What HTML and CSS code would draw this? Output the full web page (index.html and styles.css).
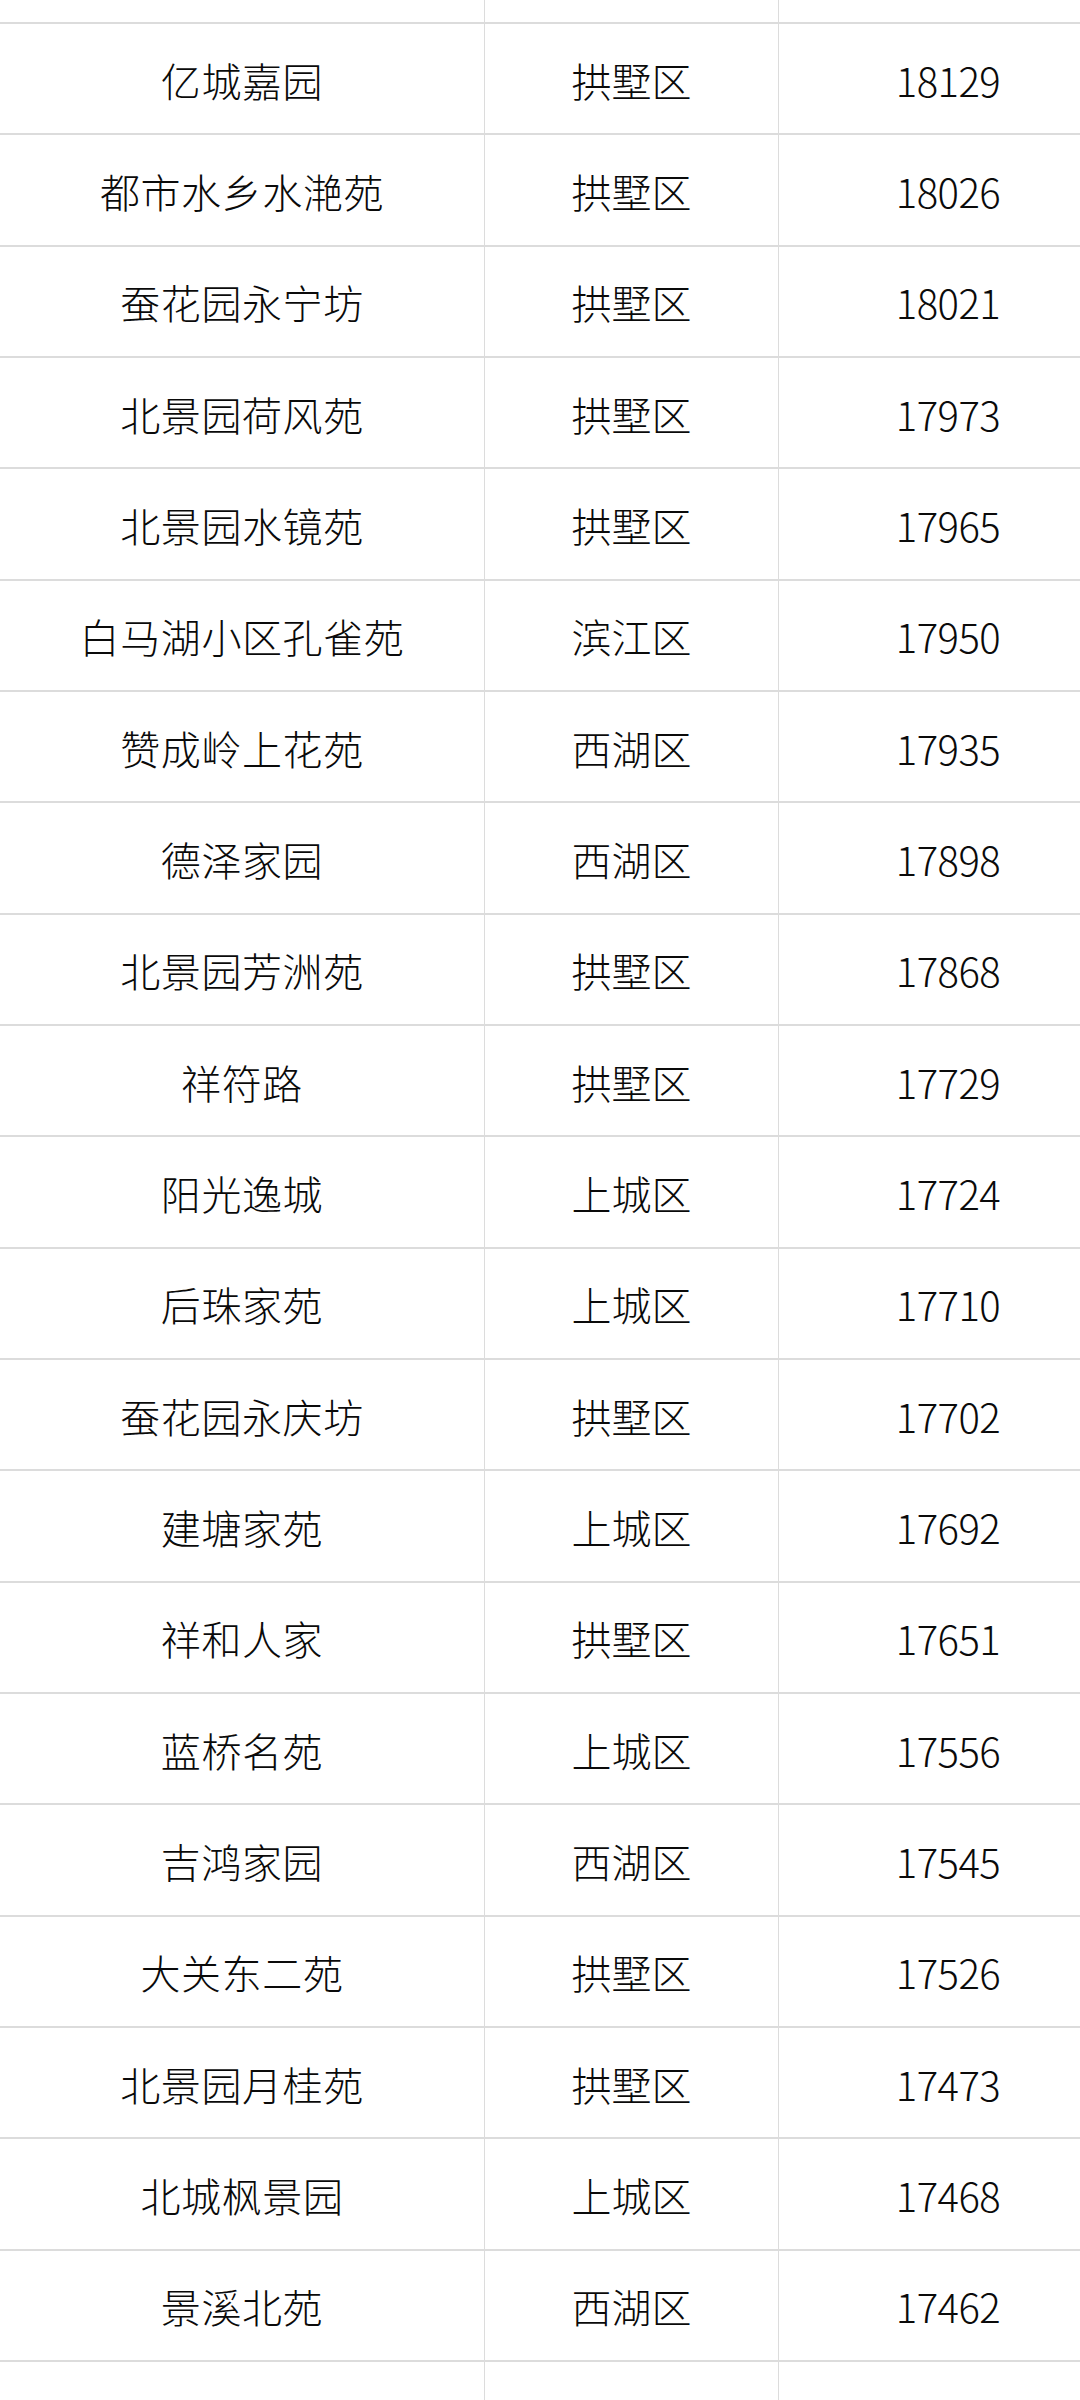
FILE: index.html
```html
<!DOCTYPE html>
<html lang="zh-CN">
<head>
<meta charset="utf-8">
<title>小区列表</title>
<link rel="stylesheet" href="styles.css">
</head>
<body>
<div class="sheet">
  <div class="row top"><div class="c name"></div><div class="c dist"></div><div class="c num"></div></div>
  <div class="row"><div class="c name">亿城嘉园</div><div class="c dist">拱墅区</div><div class="c num">18129</div></div>
  <div class="row"><div class="c name">都市水乡水滟苑</div><div class="c dist">拱墅区</div><div class="c num">18026</div></div>
  <div class="row"><div class="c name">蚕花园永宁坊</div><div class="c dist">拱墅区</div><div class="c num">18021</div></div>
  <div class="row"><div class="c name">北景园荷风苑</div><div class="c dist">拱墅区</div><div class="c num">17973</div></div>
  <div class="row"><div class="c name">北景园水镜苑</div><div class="c dist">拱墅区</div><div class="c num">17965</div></div>
  <div class="row"><div class="c name">白马湖小区孔雀苑</div><div class="c dist">滨江区</div><div class="c num">17950</div></div>
  <div class="row"><div class="c name">赞成岭上花苑</div><div class="c dist">西湖区</div><div class="c num">17935</div></div>
  <div class="row"><div class="c name">德泽家园</div><div class="c dist">西湖区</div><div class="c num">17898</div></div>
  <div class="row"><div class="c name">北景园芳洲苑</div><div class="c dist">拱墅区</div><div class="c num">17868</div></div>
  <div class="row"><div class="c name">祥符路</div><div class="c dist">拱墅区</div><div class="c num">17729</div></div>
  <div class="row"><div class="c name">阳光逸城</div><div class="c dist">上城区</div><div class="c num">17724</div></div>
  <div class="row"><div class="c name">后珠家苑</div><div class="c dist">上城区</div><div class="c num">17710</div></div>
  <div class="row"><div class="c name">蚕花园永庆坊</div><div class="c dist">拱墅区</div><div class="c num">17702</div></div>
  <div class="row"><div class="c name">建塘家苑</div><div class="c dist">上城区</div><div class="c num">17692</div></div>
  <div class="row"><div class="c name">祥和人家</div><div class="c dist">拱墅区</div><div class="c num">17651</div></div>
  <div class="row"><div class="c name">蓝桥名苑</div><div class="c dist">上城区</div><div class="c num">17556</div></div>
  <div class="row"><div class="c name">吉鸿家园</div><div class="c dist">西湖区</div><div class="c num">17545</div></div>
  <div class="row"><div class="c name">大关东二苑</div><div class="c dist">拱墅区</div><div class="c num">17526</div></div>
  <div class="row"><div class="c name">北景园月桂苑</div><div class="c dist">拱墅区</div><div class="c num">17473</div></div>
  <div class="row"><div class="c name">北城枫景园</div><div class="c dist">上城区</div><div class="c num">17468</div></div>
  <div class="row"><div class="c name">景溪北苑</div><div class="c dist">西湖区</div><div class="c num">17462</div></div>
  <div class="row"><div class="c name">大关西六苑</div><div class="c dist">拱墅区</div><div class="c num">17455</div></div>
</div>
</body>
</html>
```
FILE: styles.css
```css
html, body {
  margin: 0;
  padding: 0;
  background: #ffffff;
}
body {
  width: 1080px;
  height: 2400px;
  overflow: hidden;
  font-family: "Noto Sans CJK SC", "Noto Sans", sans-serif;
  font-weight: 300;
  color: #0a0a0a;
}
.sheet {
  margin-top: -89.33px;
}
.row {
  display: grid;
  grid-template-columns: 484px 294px 1fr;
  height: 111.33px;
  box-sizing: border-box;
  border-top: 2px solid #dcdcdc;
}
.row.top {
  border-top: none;
}
.c {
  display: flex;
  align-items: center;
  justify-content: center;
  font-size: 40px;
  line-height: 1;
  padding-top: 2px;
}
.name {
  letter-spacing: 0.6px;
}
.dist, .num {
  border-left: 1px solid #dcdcdc;
}
.num {
  padding-left: 37px;
  letter-spacing: -0.5px;
}
```
